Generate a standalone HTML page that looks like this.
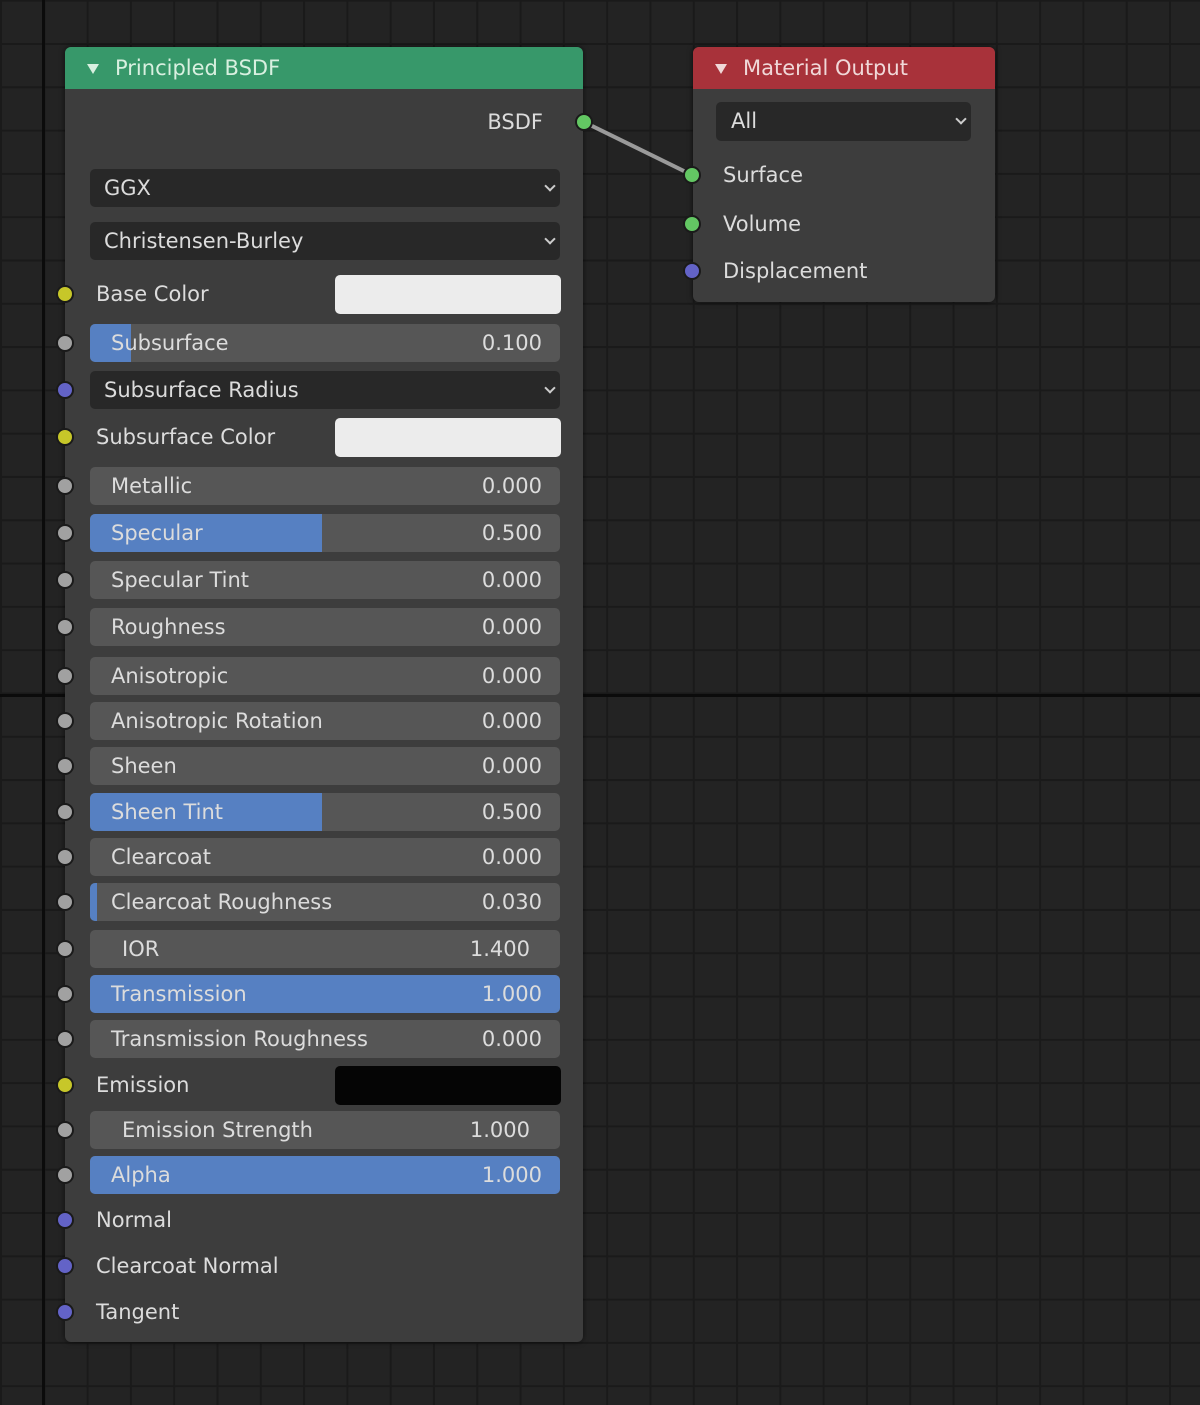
<!DOCTYPE html>
<html><head><meta charset="utf-8"><style>
*{margin:0;padding:0;box-sizing:border-box}
body{width:1200px;height:1405px;overflow:hidden;background-color:#232323;position:relative;font-family:"DejaVu Sans","Liberation Sans",sans-serif;font-size:21px;color:#dcdcdc;
background-image:linear-gradient(#0b0b0b,#0b0b0b),linear-gradient(90deg,#0b0b0b,#0b0b0b),linear-gradient(#1a1a1a 2px,transparent 2px),linear-gradient(90deg,#1a1a1a 2px,transparent 2px);
background-size:1200px 3px,3px 1405px,43.3px 43.3px,43.3px 43.3px;
background-position:0 694px,42px 0,0 43px,0 0;background-repeat:no-repeat,no-repeat,repeat,repeat}
.node{position:absolute;background:#3d3d3d;border-radius:6px;box-shadow:0 0 6px rgba(0,0,0,.6)}
.hdr{position:absolute;left:0;top:0;right:0;height:42px;border-radius:6px 6px 0 0;color:#d8f0e0;padding-left:50px;line-height:42px;font-size:21px}
.hdr:before{content:"";position:absolute;left:22px;top:17px;border-left:6px solid transparent;border-right:6px solid transparent;border-top:10px solid currentColor}
.w{position:absolute;height:38px;border-radius:5px;line-height:38px;overflow:hidden}
.sl{background:#565656}
.dd{background:#282828}
.fill{position:absolute;left:0;top:0;bottom:0;background:#5680c2}
.lbl{position:absolute;left:21px;top:0;white-space:nowrap}
.val{position:absolute;right:18px;top:0}
.chev{position:absolute;right:6px;top:13px;width:8px;height:8px;border-right:2px solid #ccc;border-bottom:2px solid #ccc;transform:rotate(45deg)}
.sock{position:absolute;width:18px;height:18px;border-radius:50%;border:2px solid #1a1a1a}
.y{background:#c7c729}.g{background:#a1a1a1}.p{background:#6363c7}.gr{background:#63c763}
.t{position:absolute;white-space:nowrap;line-height:30px}
.col{position:absolute;left:270px;width:226px;height:39px;border-radius:5px}
</style></head><body>
<svg style="position:absolute;left:0;top:0" width="1200" height="1405"><line x1="584" y1="122" x2="692" y2="175" stroke="#9a9a9a" stroke-width="4"/></svg>

<div class="node" style="left:65px;top:47px;width:518px;height:1295px">
<div class="hdr" style="background:#37986a">Principled BSDF</div>
<div class="t" style="right:40px;top:60px">BSDF</div>
<div class="w dd" style="left:25px;top:122px;width:470px"><span class="lbl" style="left:14px">GGX</span><i class="chev"></i></div>
<div class="w dd" style="left:25px;top:175px;width:470px"><span class="lbl" style="left:14px">Christensen-Burley</span><i class="chev"></i></div>

<div class="t" style="left:31px;top:232px">Base Color</div><div class="col" style="top:228px;background:#ececec"></div>
<div class="w sl" style="left:25px;top:277px;width:470px"><div class="fill" style="width:41px"></div><span class="lbl">Subsurface</span><span class="val">0.100</span></div>
<div class="w dd" style="left:25px;top:324px;width:470px"><span class="lbl" style="left:14px">Subsurface Radius</span><i class="chev"></i></div>
<div class="t" style="left:31px;top:375px">Subsurface Color</div><div class="col" style="top:371px;background:#ececec"></div>
<div class="w sl" style="left:25px;top:420px;width:470px"><span class="lbl">Metallic</span><span class="val">0.000</span></div>
<div class="w sl" style="left:25px;top:467px;width:470px"><div class="fill" style="width:232px"></div><span class="lbl">Specular</span><span class="val">0.500</span></div>
<div class="w sl" style="left:25px;top:514px;width:470px"><span class="lbl">Specular Tint</span><span class="val">0.000</span></div>
<div class="w sl" style="left:25px;top:561px;width:470px"><span class="lbl">Roughness</span><span class="val">0.000</span></div>
<div class="w sl" style="left:25px;top:610px;width:470px"><span class="lbl">Anisotropic</span><span class="val">0.000</span></div>
<div class="w sl" style="left:25px;top:655px;width:470px"><span class="lbl">Anisotropic Rotation</span><span class="val">0.000</span></div>
<div class="w sl" style="left:25px;top:700px;width:470px"><span class="lbl">Sheen</span><span class="val">0.000</span></div>
<div class="w sl" style="left:25px;top:746px;width:470px"><div class="fill" style="width:232px"></div><span class="lbl">Sheen Tint</span><span class="val">0.500</span></div>
<div class="w sl" style="left:25px;top:791px;width:470px"><span class="lbl">Clearcoat</span><span class="val">0.000</span></div>
<div class="w sl" style="left:25px;top:836px;width:470px"><div class="fill" style="width:7px"></div><span class="lbl">Clearcoat Roughness</span><span class="val">0.030</span></div>
<div class="w sl" style="left:25px;top:883px;width:470px"><span class="lbl" style="left:32px">IOR</span><span class="val" style="right:30px">1.400</span></div>
<div class="w sl" style="left:25px;top:928px;width:470px"><div class="fill" style="width:470px"></div><span class="lbl">Transmission</span><span class="val">1.000</span></div>
<div class="w sl" style="left:25px;top:973px;width:470px"><span class="lbl">Transmission Roughness</span><span class="val">0.000</span></div>
<div class="t" style="left:31px;top:1023px">Emission</div><div class="col" style="top:1019px;background:#050505"></div>
<div class="w sl" style="left:25px;top:1064px;width:470px"><span class="lbl" style="left:32px">Emission Strength</span><span class="val" style="right:30px">1.000</span></div>
<div class="w sl" style="left:25px;top:1109px;width:470px"><div class="fill" style="width:470px"></div><span class="lbl">Alpha</span><span class="val">1.000</span></div>
<div class="t" style="left:31px;top:1158px">Normal</div>
<div class="t" style="left:31px;top:1204px">Clearcoat Normal</div>
<div class="t" style="left:31px;top:1250px">Tangent</div>
</div>

<div class="node" style="left:693px;top:47px;width:302px;height:255px">
<div class="hdr" style="background:#a8323a;color:#f0d8d8">Material Output</div>
<div class="w dd" style="left:23px;top:55px;width:255px;height:39px"><span class="lbl" style="left:15px">All</span><i class="chev"></i></div>
<div class="t" style="left:30px;top:113px">Surface</div>
<div class="t" style="left:30px;top:162px">Volume</div>
<div class="t" style="left:30px;top:209px">Displacement</div>
</div>

<div class="sock gr" style="left:575px;top:113px"></div>
<div class="sock gr" style="left:683px;top:166px"></div>
<div class="sock gr" style="left:683px;top:215px"></div>
<div class="sock p" style="left:683px;top:262px"></div>

<div class="sock y" style="left:56px;top:285px"></div>
<div class="sock g" style="left:56px;top:334px"></div>
<div class="sock p" style="left:56px;top:381px"></div>
<div class="sock y" style="left:56px;top:428px"></div>
<div class="sock g" style="left:56px;top:477px"></div>
<div class="sock g" style="left:56px;top:524px"></div>
<div class="sock g" style="left:56px;top:571px"></div>
<div class="sock g" style="left:56px;top:618px"></div>
<div class="sock g" style="left:56px;top:667px"></div>
<div class="sock g" style="left:56px;top:712px"></div>
<div class="sock g" style="left:56px;top:757px"></div>
<div class="sock g" style="left:56px;top:803px"></div>
<div class="sock g" style="left:56px;top:848px"></div>
<div class="sock g" style="left:56px;top:893px"></div>
<div class="sock g" style="left:56px;top:940px"></div>
<div class="sock g" style="left:56px;top:985px"></div>
<div class="sock g" style="left:56px;top:1030px"></div>
<div class="sock y" style="left:56px;top:1076px"></div>
<div class="sock g" style="left:56px;top:1121px"></div>
<div class="sock g" style="left:56px;top:1166px"></div>
<div class="sock p" style="left:56px;top:1211px"></div>
<div class="sock p" style="left:56px;top:1257px"></div>
<div class="sock p" style="left:56px;top:1303px"></div>
</body></html>
